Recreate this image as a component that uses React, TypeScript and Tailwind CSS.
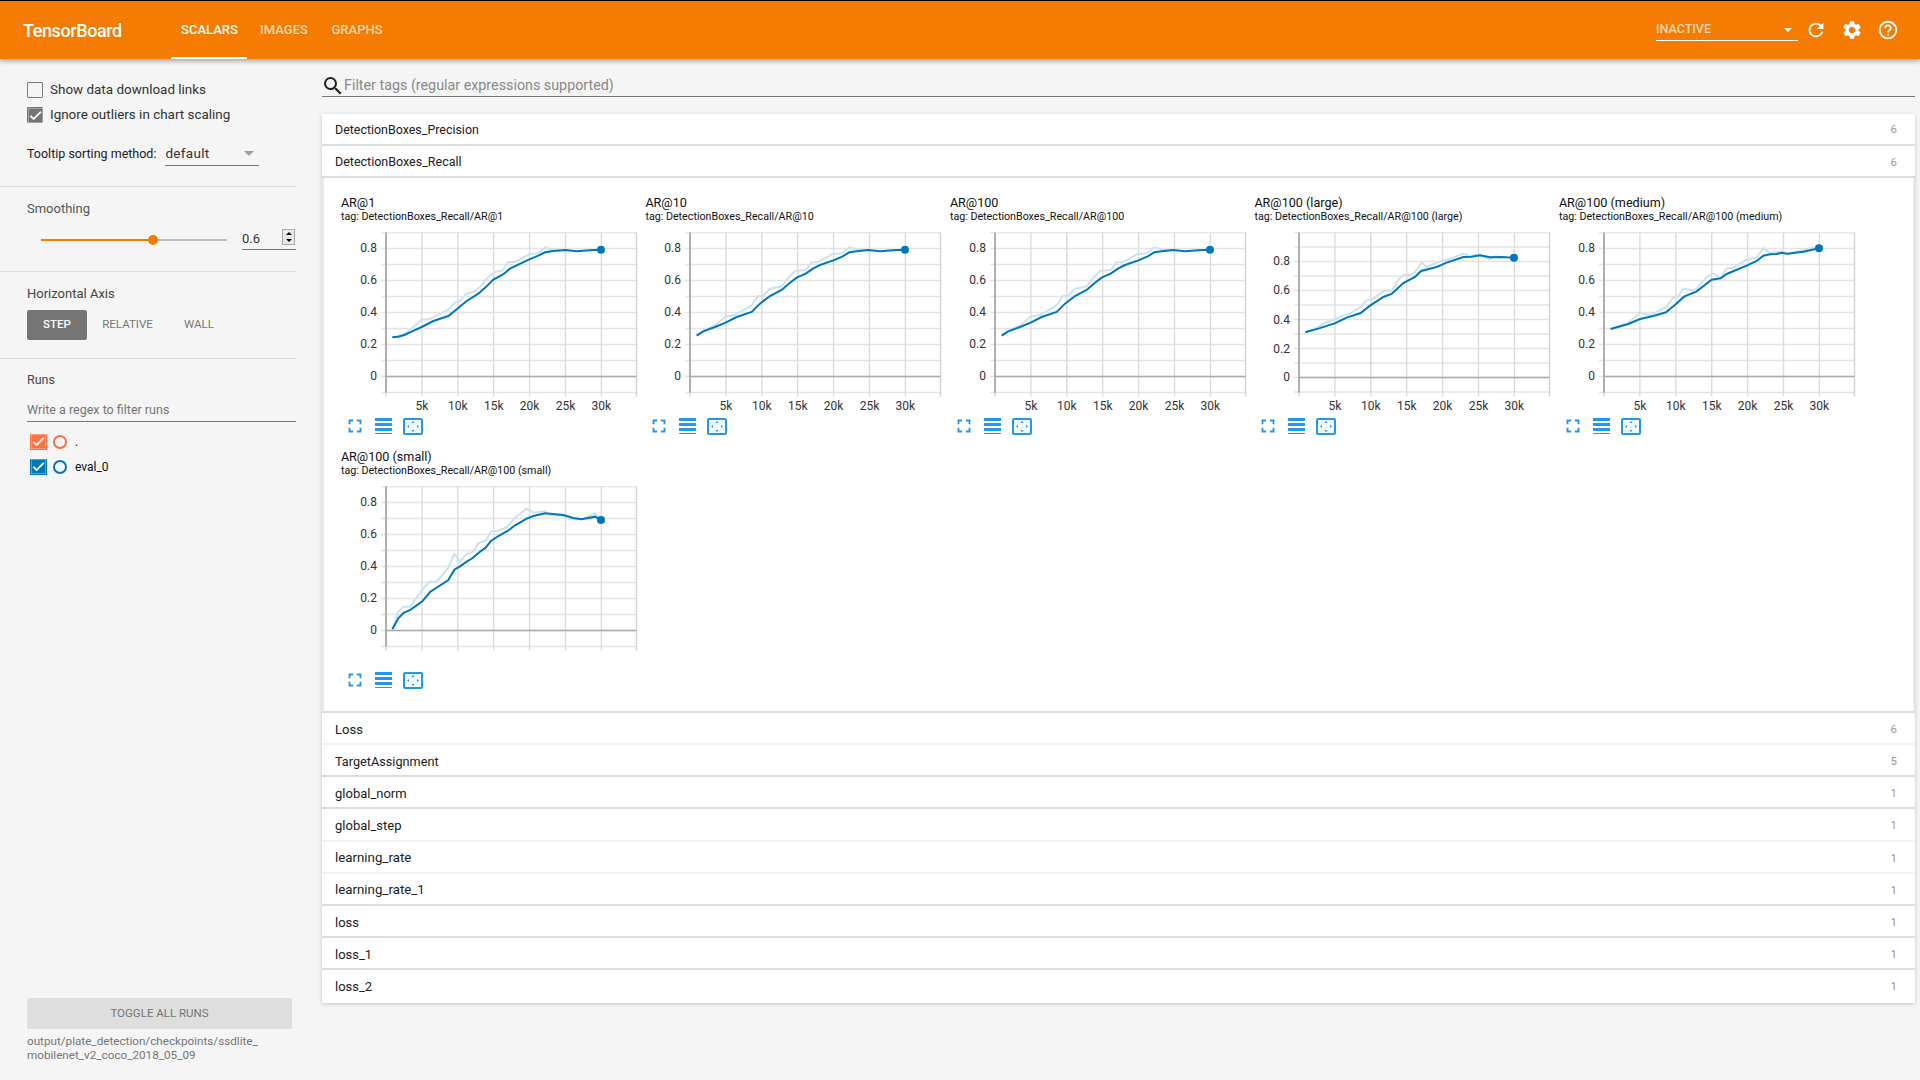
import { MdRefresh, MdSettings, MdHelpOutline, MdSearch, MdFullscreen, MdCheck } from 'react-icons/md';

type Chart = {
  title: string;
  origin: [number, number];
  dark: number[][];
  light: number[][];
  labels: [string, number][];
  minor: number;
  noTicks?: boolean;
};

// line points are read off a 3x crop, origin is the plot's corner in that crop
const ap = [
  [170, 466], [190, 453], [225, 440], [257, 427], [290, 410], [335, 395], [360, 370], [390, 347], [425, 329], [450, 307],
  [470, 292], [497, 280], [520, 264], [540, 254], [580, 240], [608, 228], [628, 216], [650, 213], [685, 209], [720, 213],
  [760, 210], [795, 208],
];
const apLight = [
  [170, 466], [190, 450], [225, 436], [257, 408], [285, 404], [335, 375], [355, 347], [370, 346], [390, 325], [425, 318],
  [445, 293], [465, 272], [497, 269], [515, 246], [535, 245], [575, 222], [605, 219], [628, 201], [655, 208], [685, 209],
];

const std: [string, number][] = [['0.8', 16], ['0.6', 48], ['0.4', 80], ['0.2', 112], ['0', 144]];
const large: [string, number][] = [['0.8', 29], ['0.6', 58.3], ['0.4', 87.6], ['0.2', 116.5], ['0', 145]];

const charts: Chart[] = [
  {
    title: 'AR@1',
    origin: [198, 155],
    labels: std,
    minor: 16,
    dark: [
      [217, 471], [235, 469], [253, 464], [270, 456], [305, 440], [340, 422], [385, 407], [412, 385], [440, 362], [475, 340],
      [500, 318], [520, 298], [548, 283], [570, 265], [590, 255], [628, 237], [655, 226], [675, 216], [700, 212], [735, 209],
      [770, 213], [810, 210], [843, 208],
    ],
    light: [
      [217, 471], [253, 462], [280, 440], [305, 418], [330, 416], [385, 388], [405, 366], [420, 362], [440, 340], [460, 335],
      [480, 320], [500, 295], [525, 275], [548, 270], [565, 245], [585, 245], [628, 222], [655, 219], [675, 201], [700, 208],
      [720, 211],
    ],
  },
  { title: 'AR@10', origin: [150, 155], labels: std, minor: 16, dark: ap, light: apLight },
  { title: 'AR@100', origin: [150, 155], labels: std, minor: 16, dark: ap, light: apLight },
  {
    title: 'AR@100 (large)',
    origin: [177, 155],
    labels: large,
    minor: 14.5,
    dark: [
      [196, 456], [235, 445], [284, 429], [320, 412], [362, 398], [390, 376], [430, 350], [455, 341], [490, 308], [525, 290],
      [543, 272], [590, 260], [620, 247], [670, 230], [695, 229], [720, 225], [750, 231], [785, 230], [822, 232],
    ],
    light: [
      [196, 456], [235, 440], [250, 430], [284, 416], [310, 406], [330, 400], [362, 380], [380, 360], [395, 358], [435, 330],
      [455, 332], [475, 298], [490, 284], [510, 284], [525, 275], [545, 247], [560, 260], [600, 243], [630, 236], [670, 220],
      [690, 228], [715, 222], [750, 237], [765, 228], [785, 231],
    ],
  },
  {
    title: 'AR@100 (medium)',
    origin: [162, 155],
    labels: std,
    minor: 16,
    dark: [
      [182, 446], [235, 431], [270, 416], [310, 407], [348, 396], [378, 371], [402, 349], [440, 333], [485, 298], [512, 294],
      [530, 281], [590, 256], [620, 242], [640, 226], [660, 222], [680, 221], [695, 217], [712, 220], [760, 214], [807, 204],
    ],
    light: [
      [182, 446], [235, 427], [270, 397], [300, 405], [348, 380], [370, 352], [385, 348], [400, 325], [425, 330], [440, 325],
      [470, 290], [490, 279], [512, 294], [530, 264], [550, 262], [590, 238], [620, 232], [640, 203], [660, 218], [695, 213],
      [712, 222], [740, 213], [807, 198],
    ],
  },
  {
    title: 'AR@100 (small)',
    origin: [198, 138],
    labels: std,
    minor: 16,
    noTicks: true,
    dark: [
      [217, 568], [235, 535], [250, 519], [272, 509], [308, 483], [330, 456], [385, 420], [403, 389], [420, 379], [440, 365],
      [458, 354], [480, 335], [497, 323], [513, 303], [535, 288], [563, 273], [585, 256], [620, 236], [640, 228], [675, 220],
      [730, 225], [760, 234], [785, 238], [825, 230], [843, 240],
    ],
    light: [
      [217, 568], [235, 515], [250, 500], [270, 500], [308, 448], [328, 425], [350, 425], [385, 383], [403, 342], [420, 365],
      [440, 342], [458, 336], [475, 310], [497, 302], [513, 274], [535, 272], [563, 260], [585, 233], [620, 206], [640, 218],
      [675, 214], [690, 225], [730, 228], [750, 238], [785, 238], [825, 220], [843, 240],
    ],
  },
];

const rowsBelow = [
  { name: 'Loss', count: 6, light: true, size: 'text-[13px]' },
  { name: 'TargetAssignment', count: 5, size: 'text-[12.7px]' },
  { name: 'global_norm', count: 1, size: 'text-[13px]' },
  { name: 'global_step', count: 1, light: true, size: 'text-[13px]' },
  { name: 'learning_rate', count: 1, light: true, size: 'text-[13.3px]' },
  { name: 'learning_rate_1', count: 1, size: 'text-[13.3px]' },
  { name: 'loss', count: 1, size: 'text-[13px]' },
  { name: 'loss_1', count: 1, size: 'text-[13px]' },
  { name: 'loss_2', count: 1, last: true, size: 'text-[13px]' },
];

function toPlot(points: number[][], origin: [number, number]) {
  return points.map(([x, y]) => `${45 + (x - origin[0]) / 3},${(y - origin[1]) / 3}`).join(' ');
}

function Plot({ chart }: { chart: Chart }) {
  const xs = [0, 35.9, 71.8, 107.7, 143.6, 179.5, 215.4, 250.5];
  const ticks = ['5k', '10k', '15k', '20k', '25k', '30k'];
  const ys: number[] = [];
  const zero = chart.labels[4][1];
  for (let y = zero + chart.minor; y >= 0; y -= chart.minor) ys.push(y);
  const end = chart.dark[chart.dark.length - 1];
  const ex = 45 + (end[0] - chart.origin[0]) / 3;
  const ey = (end[1] - chart.origin[1]) / 3;
  return (
    <svg width="300" height="180" className="block" style={{ fontFamily: 'Roboto, sans-serif' }}>
      <g transform="translate(0,0.5)">
        {ys.map((y) => (
          <line key={y} x1="40" x2="295.5" y1={y} y2={y} stroke="#e4e4e4" strokeWidth="1.6" />
        ))}
        <line x1="45" x2="295.5" y1="0" y2="0" stroke="#e8e8e8" strokeWidth="1.6" />
        {xs.map((x) => (
          <line key={x} x1={45 + x} x2={45 + x} y1="0" y2="164" stroke={x % 2 > 1 ? '#dcdcdc' : '#d2d2d2'} strokeWidth="1.4" />
        ))}
        <line x1="45" x2="45" y1="0" y2="160" stroke="#aaaaaa" strokeWidth="1.8" />
        <line x1="45" x2="295.5" y1={zero} y2={zero} stroke="#aaaaaa" strokeWidth="1.6" />
      </g>
      {chart.labels.map(([l, y]) => (
        <text key={l} x="36" y={y + 4} textAnchor="end" fontSize="12" fill="#333333">
          {l}
        </text>
      ))}
      {!chart.noTicks &&
        ticks.map((t, i) => (
          <text key={t} x={45 + xs[i + 1]} y="178" textAnchor="middle" fontSize="12" fill="#333333">
            {t}
          </text>
        ))}
      <polyline points={toPlot(chart.light, chart.origin)} fill="none" stroke="#cbe3f1" strokeWidth="2" />
      <polyline points={toPlot(chart.dark, chart.origin)} fill="none" stroke="#0077bb" strokeWidth="2" />
      <circle cx={ex} cy={ey} r="4" fill="#0077bb" />
    </svg>
  );
}

function ChartToolbar() {
  return (
    <div className="flex items-center h-[20px] pl-[3px] mt-[4px] text-[#2196f3]">
      <MdFullscreen size={22} />
      <div className="ml-[9px] w-[17px] flex flex-col gap-[2px]">
        <div className="h-[3px] bg-[#2196f3]" />
        <div className="h-[3px] bg-[#2196f3]" />
        <div className="h-[3px] bg-[#2196f3]" />
        <div className="h-[1px] bg-[#2196f3]" />
      </div>
      <svg width="20" height="17" viewBox="0 0 20 17" className="ml-[11px]">
        <rect x="1" y="1" width="18" height="15" rx="1" fill="#f5fbff" stroke="#2196f3" strokeWidth="2" />
        <path d="M10 3l1.5 2h-3zM10 14l-1.5-2h3zM4 8.5l2-1.5v3zM16 8.5l-2 1.5v-3z" fill="#2196f3" />
      </svg>
    </div>
  );
}

function ChartCard({ chart }: { chart: Chart }) {
  return (
    <div className="w-[304.5px] h-[254px] shrink-0">
      <div className="text-[12.6px] leading-[15px] text-[#111111]">{chart.title}</div>
      <div className="text-[10.7px] leading-[13px] text-[#111111] mb-[9px] whitespace-nowrap">
        tag: DetectionBoxes_Recall/{chart.title}
      </div>
      <Plot chart={chart} />
      <ChartToolbar />
    </div>
  );
}

function Row({
  name,
  count,
  light,
  last,
  size,
  below,
}: {
  name: string;
  count: number;
  light?: boolean;
  last?: boolean;
  size: string;
  below?: boolean;
}) {
  return (
    <div
      className={`flex items-center justify-between h-[32.2px] pl-[13px] pr-[18px] bg-white border-b-2 ${below ? 'pt-[3px]' : 'pt-[2px]'} ${
        last ? 'border-transparent' : light ? 'border-[#f2f2f2]' : 'border-[#dcdcdc]'
      }`}
    >
      <span className={`${size} text-[#212121]`}>{name}</span>
      <span className="text-[11.5px] text-[#999999]">{count}</span>
    </div>
  );
}

function Check({ bg, color }: { bg: string; color: string }) {
  return (
    <div className={`w-[17px] h-[16px] flex items-center justify-center ${bg} ${color}`}>
      <MdCheck size={15} strokeWidth={1} />
    </div>
  );
}

function Divider() {
  return <div className="h-[1px] bg-[#dcdcdc] w-[296px]" />;
}

function Sidebar() {
  return (
    <aside className="w-[322px] shrink-0 flex flex-col text-[13px] text-[#333333]">
      <div className="pl-[27px] pt-[23px]">
        <label className="flex items-center gap-[7px] h-[16px]">
          <div className="w-[16px] h-[16px] rounded-[1px] border border-[#7a7a7a]" />
          <span className="text-[13.45px]">Show data download links</span>
        </label>
        <label className="flex items-center gap-[7px] h-[16px] mt-[9px]">
          <div className="w-[16px] h-[16px] rounded-[1px] bg-[#757575] flex items-center justify-center text-white">
            <MdCheck size={15} strokeWidth={1} />
          </div>
          <span className="text-[13.45px]">Ignore outliers in chart scaling</span>
        </label>
        <div className="flex items-center mt-[20px] h-[22px]">
          <span className="text-[#212121] text-[12.5px] whitespace-nowrap">Tooltip sorting method:</span>
          <div className="ml-[9px] w-[94px] h-[23px] border-b border-[#757575] flex items-center justify-between pr-[5px]">
            <span className="text-[13.5px] tracking-[0.3px]">default</span>
            <div className="w-0 h-0 border-x-[5px] border-x-transparent border-t-[5px] border-t-[#9e9e9e]" />
          </div>
        </div>
      </div>
      <div className="mt-[21px]">
        <Divider />
      </div>
      <div className="pl-[27px] pt-[14px] h-[84px] w-[296px]">
        <div className="text-[13px] text-[#555555] leading-[16px]">Smoothing</div>
        <div className="flex items-center mt-[12px]">
          <div className="ml-[14px] w-[186px] h-[2px] bg-[#bdbdbd] relative">
            <div className="h-[2px] w-[112px] bg-[#f57c00]" />
            <div className="absolute left-[107px] top-[-4px] w-[10px] h-[10px] rounded-full bg-[#f57c00]" />
          </div>
          <div className="ml-[15px] w-[54px] h-[21px] border-b border-[#757575] flex items-start justify-between pr-[1px] relative">
            <span className="text-[13px] leading-[20px]">0.6</span>
            <div className="w-[13px] h-[16px] border border-[#aaaaaa] bg-[#e8e8e8] flex flex-col items-center justify-around absolute right-[1px] top-0">
              <div className="w-0 h-0 border-x-[3px] border-x-transparent border-b-[3px] border-b-black" />
              <div className="w-0 h-0 border-x-[3px] border-x-transparent border-t-[3px] border-t-black" />
            </div>
          </div>
        </div>
      </div>
      <Divider />
      <div className="pl-[27px] pt-[14px] h-[86px]">
        <div className="text-[13px] text-[#444444] leading-[16px]">Horizontal Axis</div>
        <div className="flex items-center mt-[8px] text-[11.5px] font-medium">
          <div className="w-[60px] h-[30px] rounded-[2px] bg-[#757575] text-white flex items-center justify-center">STEP</div>
          <div className="w-[81px] text-center text-[#777777] font-normal">RELATIVE</div>
          <div className="w-[32px] ml-[15px] text-center text-[#777777] font-normal">WALL</div>
        </div>
      </div>
      <Divider />
      <div className="pl-[27px] pt-[13px] w-[296px]">
        <div className="text-[12.5px] text-[#444444] leading-[16px]">Runs</div>
        <div className="mt-[10px] h-[24px] border-b border-[#757575] text-[12.5px] text-[#757575] leading-[24px]">
          Write a regex to filter runs
        </div>
        <div className="mt-[11px] pl-[3px] flex items-center h-[17px]">
          <Check bg="bg-[#ff7043]" color="text-white" />
          <div className="ml-[6px] w-[14px] h-[14px] rounded-full border-2 border-[#ff7043]" />
          <span className="ml-[8px] text-[12px] text-[#111111]">.</span>
        </div>
        <div className="mt-[8px] pl-[3px] flex items-center h-[17px]">
          <Check bg="bg-[#0077bb]" color="text-white" />
          <div className="ml-[6px] w-[14px] h-[14px] rounded-full border-2 border-[#0077bb]" />
          <span className="ml-[8px] text-[12px] text-[#111111]">eval_0</span>
        </div>
      </div>
      <div className="mt-auto pl-[27px] pb-[18px]">
        <div className="w-[265px] h-[31px] rounded-[2px] bg-[#dedede] text-[#757575] text-[11.5px] flex items-center justify-center">
          TOGGLE ALL RUNS
        </div>
        <div className="mt-[5px] text-[11.7px] leading-[14px] text-[#757575]">
          output/plate_detection/checkpoints/ssdlite_
          <br />
          mobilenet_v2_coco_2018_05_09
        </div>
      </div>
    </aside>
  );
}

export default function App() {
  return (
    <div className="w-[1920px] h-[1080px] flex flex-col overflow-hidden bg-[#f5f5f5]" style={{ fontFamily: 'Roboto, sans-serif' }}>
      <header className="h-[59px] shrink-0 border-t border-black bg-[#f57c00] text-white flex items-center shadow-[0_2px_5px_rgba(0,0,0,0.35)] relative z-10">
        <div className="ml-[23px] w-[148px] text-[18px] font-medium tracking-[-0.4px]">TensorBoard</div>
        <nav className="flex h-full text-[13px] font-medium">
          <div className="w-[76px] pl-[1px] pt-[2px] flex items-center justify-center border-b-2 border-white">SCALARS</div>
          <div className="w-[73px] pl-[1px] flex items-center justify-center text-white/70">IMAGES</div>
          <div className="w-[73px] pl-[1px] flex items-center justify-center text-white/70">GRAPHS</div>
        </nav>
        <div className="ml-auto flex items-center">
          <div className="w-[142px] h-[22px] border-b border-white flex items-center justify-between pr-[6px] text-[12.5px] text-white/70 font-medium">
            INACTIVE
            <div className="w-0 h-0 border-x-[4px] border-x-transparent border-t-[4px] border-t-white" />
          </div>
          <MdRefresh size={22} className="ml-[7px]" />
          <MdSettings size={22} className="ml-[14px]" />
          <MdHelpOutline size={22} className="ml-[14px] mr-[21px]" />
        </div>
      </header>
      <div className="flex flex-1 min-h-0">
        <Sidebar />
        <main className="flex-1 pr-[5px]">
          <div className="h-[38px] mt-0 pt-[16px] border-b border-[#757575] flex items-center">
            <MdSearch size={24} className="text-[#212121] -ml-[1px]" />
            <span className="text-[14.3px] text-[#8a8a8a] -ml-[1px]">Filter tags (regular expressions supported)</span>
          </div>
          <div className="mt-[17px] shadow-[0_1px_4px_rgba(0,0,0,0.2)]">
            <Row name="DetectionBoxes_Precision" count={6} size="text-[12.45px]" />
            <Row name="DetectionBoxes_Recall" count={6} size="text-[12.5px]" />
            <div className="h-[534.5px] bg-white border-x-2 border-[#e8e8e8] border-b-2 border-b-[#dcdcdc] pl-[16.9px] pt-[17px] flex flex-wrap content-start">
              {charts.map((c) => (
                <ChartCard key={c.title} chart={c} />
              ))}
            </div>
            {rowsBelow.map((r) => (
              <Row key={r.name} below {...r} />
            ))}
          </div>
        </main>
      </div>
    </div>
  );
}
